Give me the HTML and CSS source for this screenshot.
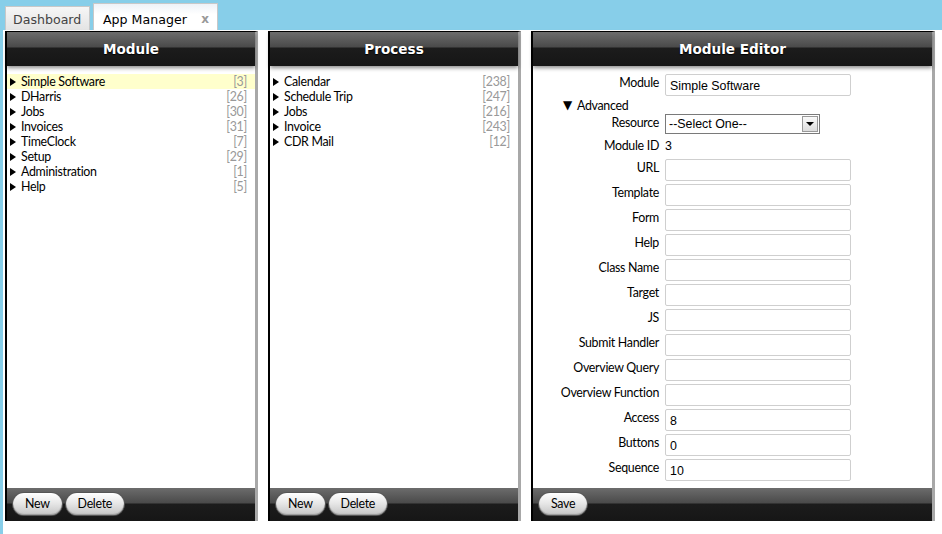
FILE: index.html
```html
<!DOCTYPE html>
<html>
<head>
<meta charset="utf-8">
<title>App Manager</title>
<link rel="stylesheet" href="styles.css">
</head>
<body>
<div class="tabs">
  <div class="tab">Dashboard</div>
  <div class="tab active">App Manager <span class="close">x</span></div>
</div>
<div class="main">
  <section class="panel panel-narrow">
    <header class="phead">Module</header>
    <ul class="list">
      <li class="item selected"><span class="arrow"></span><span class="name">Simple Software</span><span class="count">[3]</span></li>
      <li class="item"><span class="arrow"></span><span class="name">DHarris</span><span class="count">[26]</span></li>
      <li class="item"><span class="arrow"></span><span class="name">Jobs</span><span class="count">[30]</span></li>
      <li class="item"><span class="arrow"></span><span class="name">Invoices</span><span class="count">[31]</span></li>
      <li class="item"><span class="arrow"></span><span class="name">TimeClock</span><span class="count">[7]</span></li>
      <li class="item"><span class="arrow"></span><span class="name">Setup</span><span class="count">[29]</span></li>
      <li class="item"><span class="arrow"></span><span class="name">Administration</span><span class="count">[1]</span></li>
      <li class="item"><span class="arrow"></span><span class="name">Help</span><span class="count">[5]</span></li>
    </ul>
    <footer class="pfoot"><button class="btn">New</button><button class="btn">Delete</button></footer>
  </section>
  <section class="panel panel-narrow">
    <header class="phead">Process</header>
    <ul class="list">
      <li class="item"><span class="arrow"></span><span class="name">Calendar</span><span class="count">[238]</span></li>
      <li class="item"><span class="arrow"></span><span class="name">Schedule Trip</span><span class="count">[247]</span></li>
      <li class="item"><span class="arrow"></span><span class="name">Jobs</span><span class="count">[216]</span></li>
      <li class="item"><span class="arrow"></span><span class="name">Invoice</span><span class="count">[243]</span></li>
      <li class="item"><span class="arrow"></span><span class="name">CDR Mail</span><span class="count">[12]</span></li>
    </ul>
    <footer class="pfoot"><button class="btn">New</button><button class="btn">Delete</button></footer>
  </section>
  <section class="panel panel-wide">
    <header class="phead">Module Editor</header>
    <div class="form">
      <div class="row"><label class="lbl">Module</label><div class="inp">Simple Software</div></div>
      <div class="adv"><span class="down">&#9660;</span><span class="advtxt">Advanced</span></div>
      <div class="row row-sel"><label class="lbl">Resource</label><div class="select"><span>--Select One--</span><span class="selbtn"><span class="caret"></span></span></div></div>
      <div class="row row-id"><label class="lbl">Module ID</label><span class="val">3</span></div>
      <div class="row"><label class="lbl">URL</label><div class="inp"></div></div>
      <div class="row"><label class="lbl">Template</label><div class="inp"></div></div>
      <div class="row"><label class="lbl">Form</label><div class="inp"></div></div>
      <div class="row"><label class="lbl">Help</label><div class="inp"></div></div>
      <div class="row"><label class="lbl">Class Name</label><div class="inp"></div></div>
      <div class="row"><label class="lbl">Target</label><div class="inp"></div></div>
      <div class="row"><label class="lbl">JS</label><div class="inp"></div></div>
      <div class="row"><label class="lbl">Submit Handler</label><div class="inp"></div></div>
      <div class="row"><label class="lbl">Overview Query</label><div class="inp"></div></div>
      <div class="row"><label class="lbl">Overview Function</label><div class="inp"></div></div>
      <div class="row"><label class="lbl">Access</label><div class="inp">8</div></div>
      <div class="row"><label class="lbl">Buttons</label><div class="inp">0</div></div>
      <div class="row"><label class="lbl">Sequence</label><div class="inp">10</div></div>
    </div>
    <footer class="pfoot"><button class="btn">Save</button></footer>
  </section>
</div>
</body>
</html>
```
FILE: styles.css
```css
* { box-sizing: border-box; }
html, body { margin: 0; padding: 0; }
body {
  background: #87cee9;
  width: 942px;
  height: 534px;
  overflow: hidden;
  font-family: "Lato", "Liberation Sans", sans-serif;
}
.tabs {
  height: 30px;
  display: flex;
  align-items: flex-end;
  padding-left: 5px;
  gap: 3px;
}
.tab {
  height: 24px;
  padding: 0 8px 0 7px;
  border: 1px solid #c8c8c8;
  border-bottom: none;
  background: linear-gradient(#f6f6f6, #e4e4e4);
  font-family: "DejaVu Sans", sans-serif;
  font-size: 12.6px;
  color: #444;
  line-height: 25px;
  width: 85px;
}
.tab.active {
  height: 27px;
  line-height: 31px;
  background: linear-gradient(#eef2f8, #ffffff 40%);
  color: #000;
  width: 125px;
  padding-left: 9px;
  display: flex;
  justify-content: space-between;
}
.close {
  color: #999;
  font-weight: bold;
  font-size: 12px;
}
.main {
  background: #fff;
  margin-left: 3px;
  height: 504px;
  padding: 1px 0 0 2px;
  display: flex;
  gap: 10px;
}
.panel {
  height: 490px;
  display: flex;
  flex-direction: column;
  border-left: 2px solid #000;
  border-top: 1px solid #000;
  border-right: 3px solid #a8a8a8;
  background: #fff;
}
.panel-narrow { width: 253px; }
.panel-wide { width: 404px; }
.phead {
  height: 34px;
  flex: none;
  background: linear-gradient(#6c6c6c 0, #4a4a4a 15px, #1c1c1c 16px, #161616 100%);
  color: #fff;
  font-family: "DejaVu Sans", sans-serif;
  font-weight: bold;
  font-size: 13.6px;
  text-align: center;
  line-height: 35px;
  text-shadow: 0 1px 1px #000;
  box-shadow: 0 2px 4px rgba(0,0,0,0.45);
  position: relative;
}
.list {
  list-style: none;
  margin: 0;
  padding: 8px 0 0 0;
  flex: 1;
}
.item {
  display: flex;
  align-items: center;
  height: 15px;
  padding: 0 8px 0 3px;
  font-size: 12.4px;
  letter-spacing: -0.3px;
  color: #000;
}
.item.selected { background: #ffffcc; }
.arrow {
  width: 0;
  height: 0;
  border-top: 4.5px solid transparent;
  border-bottom: 4.5px solid transparent;
  border-left: 6px solid #000;
  margin-right: 5px;
}
.name { flex: 1; }
.count { color: #999; }
.pfoot {
  height: 33px;
  flex: none;
  background: linear-gradient(#6c6c6c 0, #4a4a4a 15px, #1c1c1c 16px, #161616 100%);
  padding: 5px 0 0 6px;
  display: flex;
  align-items: flex-start;
  gap: 4px;
}
.btn {
  height: 22px;
  border: none;
  border-radius: 11px;
  padding: 0 12px;
  background: linear-gradient(#ffffff, #e8e8e8 45%, #c4c4c4 100%);
  box-shadow: 0 0 0 1px #555, inset 0 -1px 1px #999;
  font-family: "Lato", "Liberation Sans", sans-serif;
  font-size: 12.4px;
  letter-spacing: -0.3px;
  color: #000;
  line-height: 22px;
}
.form {
  flex: 1;
  padding-top: 8px;
  display: flex;
  flex-direction: column;
}
.row {
  display: flex;
  align-items: flex-start;
  gap: 6px;
  margin-bottom: 3px;
}
.lbl {
  width: 126px;
  text-align: right;
  font-size: 12.4px;
  letter-spacing: -0.3px;
  line-height: 18px;
  color: #000;
}
.inp {
  width: 186px;
  height: 22px;
  border: 1px solid #cfcfcf;
  border-radius: 2px;
  padding: 1px 4px 0;
  font-family: "Liberation Sans", sans-serif;
  font-size: 12.4px;
  line-height: 21px;
  color: #000;
}
.adv {
  height: 13px;
  line-height: 13px;
  margin: 0 0 2px 30px;
  font-size: 12.4px;
  letter-spacing: -0.3px;
  display: flex;
  align-items: center;
}
.down { font-size: 12px; font-family: "DejaVu Sans", sans-serif; margin-right: 5px; }
.row-sel { margin-bottom: 3px; }
.select {
  width: 155px;
  height: 20px;
  border: 1px solid #7a7a7a;
  display: flex;
  align-items: center;
  justify-content: space-between;
  padding: 0 1px 0 3px;
  font-family: "Liberation Sans", sans-serif;
  font-size: 12.4px;
}
.selbtn {
  width: 16px;
  height: 16px;
  border: 1px solid #999;
  background: linear-gradient(#fafafa, #dcdcdc);
  display: flex;
  align-items: center;
  justify-content: center;
}
.caret {
  width: 0; height: 0;
  border-left: 4px solid transparent;
  border-right: 4px solid transparent;
  border-top: 4px solid #000;
}
.row-id { margin-bottom: 4px; height: 18px; }
.val {
  font-family: "Liberation Sans", sans-serif;
  font-size: 12.4px;
  line-height: 18px;
}
```
